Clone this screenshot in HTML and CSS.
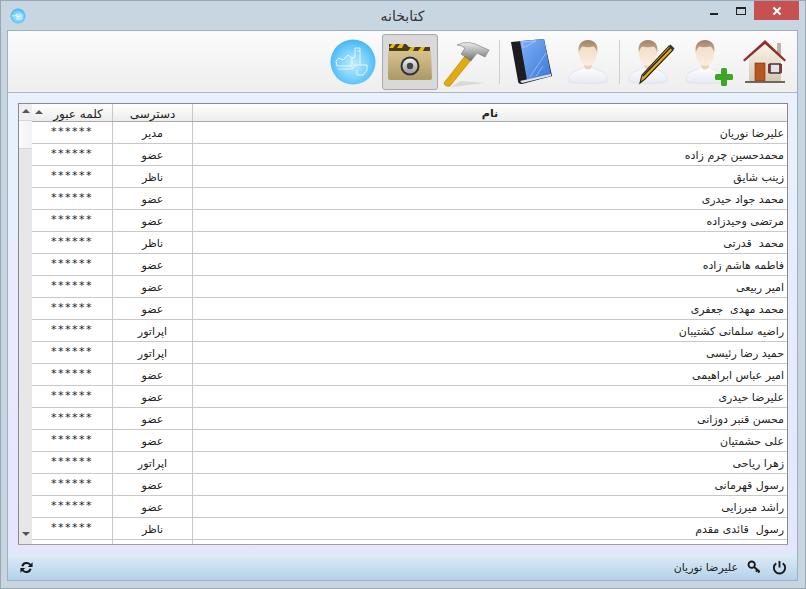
FILE: index.html
```html
<!DOCTYPE html>
<html lang="fa">
  <head>
    <meta charset="UTF-8" />
    <title>کتابخانه</title>
    <link rel="stylesheet" href="styles.css">
  </head>
  <body>
    <svg class="defs" width="0" height="0">
      <defs>
        <linearGradient id="skin" x1="0" y1="0" x2="0" y2="1">
          <stop offset="0" stop-color="#f0d8c0" /><stop offset="1" stop-color="#fbeee2" />
        </linearGradient>
        <linearGradient id="hair" x1="0" y1="0" x2="0" y2="1">
          <stop offset="0" stop-color="#a08468" /><stop offset="1" stop-color="#c9ae94" />
        </linearGradient>
        <linearGradient id="shirt" x1="0" y1="0" x2="0" y2="1">
          <stop offset="0" stop-color="#ffffff" /><stop offset="1" stop-color="#e6eaf2" />
        </linearGradient>
        <linearGradient id="folder" x1="0" y1="0" x2="0" y2="1">
          <stop offset="0" stop-color="#d6c48f" /><stop offset="1" stop-color="#ad9866" />
        </linearGradient>
        <linearGradient id="cover" x1="0" y1="0" x2="1" y2="1">
          <stop offset="0" stop-color="#7fb0f5" /><stop offset="1" stop-color="#3b78d8" />
        </linearGradient>
        <linearGradient id="wall" x1="0" y1="0" x2="0" y2="1">
          <stop offset="0" stop-color="#fbf6ea" /><stop offset="1" stop-color="#d3c8b2" />
        </linearGradient>
        <linearGradient id="steel" x1="0" y1="0" x2="0" y2="1">
          <stop offset="0" stop-color="#ececec" /><stop offset="1" stop-color="#6f7174" />
        </linearGradient>
        <linearGradient id="dial" x1="0" y1="0" x2="0" y2="1">
          <stop offset="0" stop-color="#f0f0f0" /><stop offset="1" stop-color="#9c9c9c" />
        </linearGradient>
        <radialGradient id="bubble" cx="0.5" cy="0.55" r="0.55">
          <stop offset="0" stop-color="#c4ecff" /><stop offset="0.65" stop-color="#70cdfb" /><stop offset="1" stop-color="#45b6f5" />
        </radialGradient>
        <symbol id="person" viewBox="0 0 46 50">
          <path d="M3 47c-2-4 0-9 4-11 5-2 10-3 12-6h8c2 3 7 4 12 6 4 2 6 7 4 11-8 2-32 2-40 0z" fill="url(#shirt)" stroke="#d5dbe6" stroke-width=".6" />
          <path d="M19 24h8v7c-2 3-6 3-8 0z" fill="#e6d3c0" />
          <ellipse cx="23" cy="15" rx="10" ry="14" fill="url(#skin)" />
          <path d="M13 15C11 5 17 1 23 1s12 4 10 14c-1-4-2-6-4-7-4 1-9 1-12 0-2 1-3 3-4 7z" fill="url(#hair)" />
        </symbol>
      </defs>
    </svg>

    <div class="window">
      <header class="titlebar">
        <svg class="app-icon" width="16" height="16" viewBox="0 0 16 16">
          <circle cx="8" cy="8" r="7.5" fill="url(#bubble)" />
          <path d="M3 9V7l2 1 2-2v3h3V5m2 1v5H6" fill="none" stroke="#fff" stroke-width=".7" />
        </svg>
        <h1 class="title">کتابخانه</h1>
        <div class="win-buttons">
          <span class="win-btn"><i class="min-mark"></i></span>
          <span class="win-btn"><i class="max-mark"></i></span>
          <span class="win-btn close-btn">
            <svg width="10" height="10" viewBox="0 0 10 10"><path d="M1.5 1.5l7 7m0-7l-7 7" stroke="#fff" stroke-width="2" /></svg>
          </span>
        </div>
      </header>

      <div class="panel">
        <nav class="toolbar">
          <!-- logo -->
          <span class="tool">
            <svg width="46" height="46" viewBox="0 0 46 46">
              <circle cx="23" cy="23" r="22.5" fill="url(#bubble)" />
              <path d="M6 22l3-3 4 2 5-5 4 3v8H7zM22 19l3-1V9h5v3h-3M30 12v14h-5l-3 4H8m22-4h7v5l-4 5h-6v-5" fill="none" stroke="#eefaff" stroke-width=".9" />
            </svg>
          </span>
          <!-- safe folder, the active page -->
          <span class="tool tool-active">
            <svg width="46" height="40" viewBox="0 0 46 40">
              <path d="M2 2h17l3 3h21v6H2z" fill="#4a3c1c" />
              <path d="M5 2h4L6 6H2zM13 2h4l-2 4h-5zM24 5h4l-2 4h-5zM34 5h4l-2 4h-5z" fill="#e8b820" />
              <path d="M1 9h43l1 27c0 1-1 2-2 2H3c-1 0-2-1-2-2z" fill="url(#folder)" />
              <circle cx="23" cy="24" r="9.500" fill="#333" />
              <circle cx="23" cy="24" r="7.500" fill="url(#dial)" />
              <circle cx="23" cy="24" r="3.200" fill="#444" />
            </svg>
          </span>
          <!-- hammer -->
          <span class="tool">
            <svg class="over" width="46" height="46" viewBox="0 0 46 46">
              <path d="M7 48l34-4-24-2z" fill="#c9c9c9" opacity=".6" />
              <path d="M0 44L21 17l6 4L6 47q-5 1-6-3z" fill="#e3a90f" stroke="#a87c08" stroke-width=".6" />
              <path d="M13 6Q24 0 38 8l7 3-4 7-8-4-6 8-10-7 4-6q-4-3-8-3z" fill="url(#steel)" stroke="#666" stroke-width=".5" />
            </svg>
          </span>
          <span class="tool-sep tool-sep-wide"></span>
          <!-- book -->
          <span class="tool">
            <svg width="42" height="46" viewBox="0 0 42 46">
              <path d="M1 3l33-3 8 37-30 8c-3 0-4-1-4-3z" fill="#1d1d1f" />
              <path d="M10 2l24-2 7 36-24 5z" fill="url(#cover)" />
              <path d="M10 42l31-7v2L12 44z" fill="#dfe6ef" />
              <path d="M12 3l14-1-13 7zM20 38L36 14M26 37l7-10" fill="none" stroke="#bcd6fb" stroke-width=".6" />
            </svg>
          </span>
          <!-- user -->
          <span class="tool">
            <svg width="42" height="46" viewBox="0 0 46 50"><use href="#person" /></svg>
          </span>
          <span class="tool-sep"></span>
          <!-- edit user -->
          <span class="tool">
            <svg width="50" height="46" viewBox="0 0 50 46">
              <svg x="1" width="42" height="46" viewBox="0 0 46 50"><use href="#person" /></svg>
              <path d="M14 44l2-8L43 7l4 4-28 29z" fill="#e2ad18" stroke="#26241c" stroke-width="1.100" />
              <path d="M17 37L44 9" stroke="#222" stroke-width="1.400" />
              <path d="M43 7l1.500-1.500 4 4-1.500 1.500z" fill="#333" />
            </svg>
          </span>
          <!-- add user -->
          <span class="tool">
            <svg class="over" width="50" height="46" viewBox="0 0 50 46">
              <svg x="1" width="42" height="46" viewBox="0 0 46 50"><use href="#person" /></svg>
              <rect x="32" y="35" width="18" height="6" rx="1.500" fill="#3fa524" />
              <rect x="38" y="29" width="6" height="18" rx="1.500" fill="#3fa524" />
            </svg>
          </span>
          <!-- home -->
          <span class="tool">
            <svg width="46" height="46" viewBox="0 0 46 46">
              <path d="M35 4h4v14h-4z" fill="#bcb3a4" />
              <path d="M7 19L23 5l16 14v23H7z" fill="url(#wall)" />
              <path d="M1 21L23 1l21 20-1.500 1.500L23 5 2.500 22.500z" fill="#8f2f2a" />
              <path d="M13 24h10v18H13z" fill="#b8561f" stroke="#6e3212" stroke-width=".6" />
              <path d="M28 25h10v9H28z" fill="#dfe4ea" stroke="#4a3030" stroke-width="1.600" />
              <path d="M26 25h2v9h-2zM38 25h2v9h-2z" fill="#8a3230" />
              <path d="M3 42h40v2H3z" fill="#6f675a" />
            </svg>
          </span>
        </nav>

        <main class="content">
          <div class="grid-wrap">
            <div class="scroll">
              <span class="scroll-btn"><i class="arrow-up"></i></span>
              <span class="scroll-thumb"></span>
              <span class="scroll-track"></span>
              <span class="scroll-btn scroll-btn-down"><i class="arrow-down"></i></span>
            </div>
            <table class="grid">
              <thead>
                <tr>
                  <th class="col-pass"><i class="arrow-up sort"></i><span class="pass-head">کلمه عبور</span></th>
                  <th class="col-role">دسترسی</th>
                  <th class="col-name">نام</th>
                </tr>
              </thead>
              <tbody>
                <tr><td class="col-pass">******</td><td class="col-role">مدیر</td><td class="col-name">علیرضا نوریان</td></tr>
                <tr><td class="col-pass">******</td><td class="col-role">عضو</td><td class="col-name">محمدحسین چرم زاده</td></tr>
                <tr><td class="col-pass">******</td><td class="col-role">ناظر</td><td class="col-name">زینب شایق</td></tr>
                <tr><td class="col-pass">******</td><td class="col-role">عضو</td><td class="col-name">محمد جواد حیدری</td></tr>
                <tr><td class="col-pass">******</td><td class="col-role">عضو</td><td class="col-name">مرتضی وحیدزاده</td></tr>
                <tr><td class="col-pass">******</td><td class="col-role">ناظر</td><td class="col-name">محمد&nbsp; قدرتی</td></tr>
                <tr><td class="col-pass">******</td><td class="col-role">عضو</td><td class="col-name">فاطمه هاشم زاده</td></tr>
                <tr><td class="col-pass">******</td><td class="col-role">عضو</td><td class="col-name">امیر ربیعی</td></tr>
                <tr><td class="col-pass">******</td><td class="col-role">عضو</td><td class="col-name">محمد مهدی&nbsp; جعفری</td></tr>
                <tr><td class="col-pass">******</td><td class="col-role">اپراتور</td><td class="col-name">راضیه سلمانی کشتیبان</td></tr>
                <tr><td class="col-pass">******</td><td class="col-role">اپراتور</td><td class="col-name">حمید رضا رئیسی</td></tr>
                <tr><td class="col-pass">******</td><td class="col-role">عضو</td><td class="col-name">امیر عباس ابراهیمی</td></tr>
                <tr><td class="col-pass">******</td><td class="col-role">عضو</td><td class="col-name">علیرضا حیدری</td></tr>
                <tr><td class="col-pass">******</td><td class="col-role">عضو</td><td class="col-name">محسن قنبر دوزانی</td></tr>
                <tr><td class="col-pass">******</td><td class="col-role">عضو</td><td class="col-name">علی حشمتیان</td></tr>
                <tr><td class="col-pass">******</td><td class="col-role">اپراتور</td><td class="col-name">زهرا ریاحی</td></tr>
                <tr><td class="col-pass">******</td><td class="col-role">عضو</td><td class="col-name">رسول قهرمانی</td></tr>
                <tr><td class="col-pass">******</td><td class="col-role">عضو</td><td class="col-name">راشد میرزایی</td></tr>
                <tr><td class="col-pass">******</td><td class="col-role">ناظر</td><td class="col-name">رسول&nbsp; قائدی مقدم</td></tr>
                <tr><td class="col-pass"></td><td class="col-role"></td><td class="col-name"></td></tr>
              </tbody>
            </table>
          </div>
        </main>

        <footer class="statusbar">
          <svg width="15" height="15" viewBox="0 0 16 16">
            <path d="M2.500 6.500A5.800 5.800 0 0 1 12.600 4.200L14.500 2.500V7.500H9.500L11.200 5.700A3.700 3.700 0 0 0 4.700 7zM13.500 9.500A5.800 5.800 0 0 1 3.400 11.800L1.500 13.500V8.500H6.500L4.800 10.300A3.700 3.700 0 0 0 11.300 9z" fill="#1a1a1a" />
          </svg>
          <div class="user-info">
            <span class="user-name">علیرضا نوریان</span>
            <svg width="15" height="15" viewBox="0 0 16 16">
              <circle cx="5" cy="5" r="3.400" fill="none" stroke="#1a1a1a" stroke-width="2" />
              <path d="M7.500 7.500l6 5m-2.500-2l-1.500 2m3.500-.5l-1 1.500" stroke="#1a1a1a" stroke-width="2" fill="none" />
            </svg>
            <svg width="15" height="15" viewBox="0 0 16 16">
              <path d="M4.500 3.500a6 6 0 1 0 7 0" fill="none" stroke="#1a1a1a" stroke-width="2" />
              <path d="M8 1v7" stroke="#1a1a1a" stroke-width="2" />
            </svg>
          </div>
        </footer>
      </div>
    </div>
  </body>
</html>
```

FILE: styles.css
```css
html, body {
    margin: 0;
    height: 100%;
    overflow: hidden;
}
body {
    font-family: "DejaVu Sans", "Noto Sans", sans-serif;
    font-size: 11px;
    color: #222;
}
.defs {
    display: block;
    height: 0;
}
.window {
    box-sizing: border-box;
    width: 806px;
    height: 589px;
    display: flex;
    flex-direction: column;
    background: #c8d6e1;
    border: 1px solid #9aa8b3;
    padding: 0 7px 7px 6px;
}
.titlebar {
    height: 29px;
    flex: none;
    display: flex;
    align-items: center;
    position: relative;
}
.app-icon {
    margin: 0 0 0 3px;
}
.title {
    position: absolute;
    left: 0;
    right: 0;
    top: 7px;
    margin: 0;
    text-align: center;
    font-size: 14px;
    font-weight: normal;
    color: #333;
}
.win-buttons {
    position: absolute;
    right: -1px;
    top: 0;
    display: flex;
}
.win-btn {
    width: 27px;
    height: 19px;
    flex: none;
    display: flex;
    align-items: center;
    justify-content: center;
}
.close-btn {
    width: 45px;
    background: #c75050;
}
.min-mark {
    display: block;
    width: 8px;
    height: 2px;
    margin-top: 7px;
    background: #222;
}
.max-mark {
    display: block;
    box-sizing: border-box;
    width: 10px;
    height: 8px;
    border: 1px solid #222;
    border-top-width: 2px;
}
.panel {
    flex: 1;
    min-height: 0;
    display: flex;
    flex-direction: column;
    border: 1px solid #9fb0bc;
}
.toolbar {
    height: 61px;
    flex: none;
    display: flex;
    align-items: center;
    justify-content: flex-end;
    gap: 1px;
    padding-right: 4px;
    background: linear-gradient(#fbfbfb, #eeeeee);
    border-bottom: 1px solid #b0b4b8;
}
.tool {
    box-sizing: border-box;
    width: 56px;
    height: 56px;
    display: flex;
    align-items: center;
    justify-content: center;
    border: 1px solid transparent;
    border-radius: 3px;
}
.over {
    overflow: visible;
}
.tool-active {
    background: #d9d9d9;
    border-color: #a9a9a9;
}
.tool-sep {
    width: 1px;
    height: 44px;
    margin: 0 2px;
    background: #d0d0d0;
}
.tool-sep-wide {
    margin-left: 3px;
}
.content {
    flex: 1;
    min-height: 0;
    display: flex;
    padding: 10px 9px 9px 10px;
    background: linear-gradient(#e9f1fd, #e3e6fd);
}
.grid-wrap {
    flex: 1;
    display: flex;
    overflow: hidden;
    background: #fff;
    border: 1px solid #8a8a8a;
    border-bottom-color: #a0a0a0;
}
.scroll {
    width: 13px;
    flex: none;
    display: flex;
    flex-direction: column;
    background: #e7e7e7;
}
.scroll-btn {
    height: 17px;
    flex: none;
    display: flex;
    justify-content: center;
    padding-top: 5px;
    box-sizing: border-box;
    background: #efefef;
    border-bottom: 1px solid #d8d8d8;
}
.scroll-btn-down {
    border-bottom: none;
    background: #e7e7e7;
}
.scroll-thumb {
    height: 27px;
    flex: none;
    background: linear-gradient(90deg, #fbfbfb, #f2f2f2);
    border-bottom: 1px solid #d5d5d5;
}
.scroll-track {
    flex: 1;
}
.arrow-up, .arrow-down {
    display: block;
    width: 0;
    height: 0;
    border-left: 4px solid transparent;
    border-right: 4px solid transparent;
}
.arrow-up {
    border-bottom: 4px solid #555;
}
.arrow-down {
    border-top: 4px solid #555;
}
.grid {
    flex: 1;
    border-collapse: collapse;
    table-layout: fixed;
    align-self: flex-start;
}
.grid th {
    height: 15px;
    padding: 2px 0 0 0;
    font-size: 12px;
    font-weight: normal;
    line-height: 14px;
    text-align: center;
    background: linear-gradient(#ffffff, #ececec);
    border-right: 1px solid #c8c8c8;
    border-bottom: 1px solid #a8a8a8;
    position: relative;
}
.grid th:last-child {
    font-size: 11px;
    font-weight: bold;
    border-right: none;
}
.pass-head {
    margin-left: 12px;
}
.sort {
    position: absolute;
    left: 3px;
    top: 6px;
}
.grid td {
    height: 21px;
    padding: 0;
    border-right: 1px solid #c8c8c8;
    border-bottom: 1px solid #c8c8c8;
    text-align: center;
    direction: rtl;
    overflow: hidden;
    white-space: nowrap;
}
.grid td:last-child {
    border-right: none;
}
.col-pass {
    width: 80px;
}
.grid td.col-pass {
    vertical-align: top;
    line-height: 15px;
    padding-top: 2px;
    height: 19px;
    letter-spacing: 1.5px;
}
.col-role {
    width: 79px;
}
.grid td.col-role {
    padding-top: 1px;
    height: 20px;
}
.grid td.col-name {
    text-align: right;
    padding: 1px 3px 0 0;
    height: 20px;
}
.statusbar {
    height: 26px;
    flex: none;
    display: flex;
    align-items: center;
    justify-content: space-between;
    padding: 0 10px 0 11px;
    background: linear-gradient(#e0ebf8, #b3d2e8);
}
.user-info {
    display: flex;
    align-items: center;
    gap: 10px;
}
.user-name {
    margin-right: -1px;
}
```
